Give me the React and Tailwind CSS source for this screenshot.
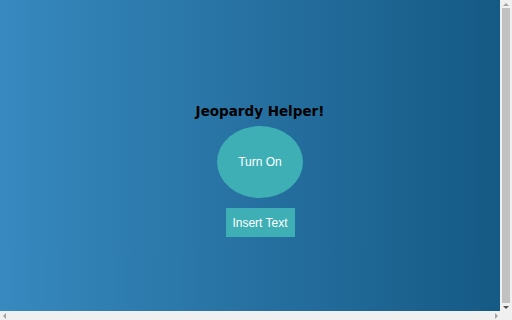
export default function App() {
  return (
    <div className="w-[512px] h-[320px] flex flex-col overflow-hidden bg-[#f0f0f0]">
      <div className="flex flex-1 min-h-0">
        <div className="flex-1 bg-gradient-to-r from-[#3789bf] to-[#155a85] flex flex-col items-center pl-[20px] pt-[102px]">
          <h1 className="text-[13.5px] font-bold text-black leading-[18px]" style={{ fontFamily: '"DejaVu Sans", Verdana, sans-serif' }}>
            Jeopardy Helper!
          </h1>
          <button className="mt-[6px] w-[86px] h-[72px] rounded-[50%] bg-[#3eafb5] text-white text-[12px]" style={{ fontFamily: '"Liberation Sans", Arial, sans-serif' }}>
            Turn On
          </button>
          <button className="mt-[10px] w-[69px] h-[29px] bg-[#3eafb5] text-white text-[12px]" style={{ fontFamily: '"Liberation Sans", Arial, sans-serif' }}>
            Insert Text
          </button>
        </div>
        <div className="w-[12px] bg-[#f0f0f0] flex flex-col items-center">
          <div className="h-[8px] flex items-center justify-center">
            <div className="w-0 h-0 border-l-[3px] border-r-[3px] border-b-[3px] border-l-transparent border-r-transparent border-b-[#a3a3a3]" />
          </div>
          <div className="flex-1 w-[8px] bg-[#c1c1c1]" />
          <div className="h-[8px] flex items-center justify-center">
            <div className="w-0 h-0 border-l-[3px] border-r-[3px] border-t-[3px] border-l-transparent border-r-transparent border-t-[#505050]" />
          </div>
        </div>
      </div>
      <div className="h-[9px] flex items-center bg-[#f0f0f0]">
        <div className="w-[8px] flex items-center justify-center">
          <div className="w-0 h-0 border-t-[3px] border-b-[3px] border-r-[3px] border-t-transparent border-b-transparent border-r-[#a3a3a3]" />
        </div>
        <div className="flex-1" />
        <div className="w-[8px] flex items-center justify-center mr-[12px]">
          <div className="w-0 h-0 border-t-[3px] border-b-[3px] border-l-[3px] border-t-transparent border-b-transparent border-l-[#a3a3a3]" />
        </div>
      </div>
    </div>
  );
}
